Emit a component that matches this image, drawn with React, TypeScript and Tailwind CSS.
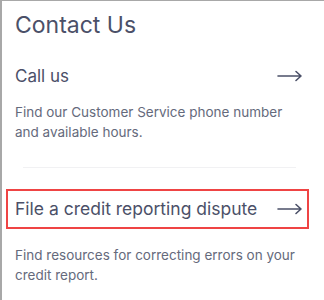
const Arrow = () => (
  <svg width="26" height="12" viewBox="0 0 26 12" fill="none" className="shrink-0">
    <path d="M1 6h23M19 1.5 24 6l-5 4.5" stroke="#4b5068" strokeWidth="1.6" strokeLinecap="round" strokeLinejoin="round" />
  </svg>
);

export default function App() {
  return (
    <div
      className="w-[324px] h-[300px] overflow-hidden bg-white border-l-2 border-t border-[#a8a8a8]"
      style={{ fontFamily: "Inter, 'Noto Sans', sans-serif" }}
    >
      <div className="pl-[13px] pr-[20px]">
        <h1 className="pt-[9px] text-[23px] leading-[30px] text-[#4b5068]">Contact Us</h1>

        <div className="mt-[25px] flex items-center justify-between pr-[1px]">
          <span className="text-[17px] leading-[22px] text-[#4b5068]">Call us</span>
          <Arrow />
        </div>
        <p className="mt-[15px] w-[282px] text-[13.5px] leading-[20px] text-[#656a7c]">
          Find our Customer Service phone number and available hours.
        </p>

        <div className="mt-[25px] mx-[8px] h-px bg-[#f1f1f3]" />
      </div>

      <div className="ml-[4px] mt-[21px] w-[303px] h-[40px] border-2 border-[#ef4444] flex items-center justify-between pl-[7px] pr-[4px]">
        <span className="text-[17.5px] leading-[22px] text-[#4b5068]">File a credit reporting dispute</span>
        <Arrow />
      </div>

      <p className="pl-[13px] pr-[20px] mt-[16px] text-[13.5px] leading-[20px] text-[#656a7c]">
        Find resources for correcting errors on your credit report.
      </p>
    </div>
  );
}
